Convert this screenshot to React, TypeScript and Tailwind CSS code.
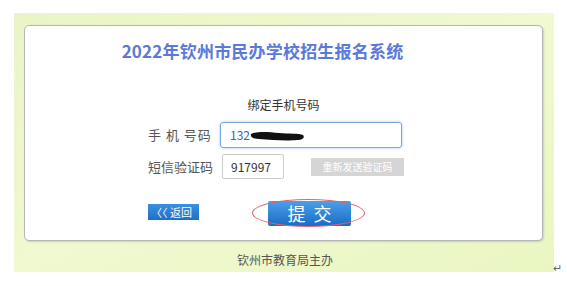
export default function App() {
  return (
    <div
      className="w-[567px] h-[286px] bg-white relative"
      style={{ fontFamily: '"Noto Sans CJK SC", "Liberation Sans", sans-serif' }}
    >
      <div className="pt-[13px] pl-[14px]">
        <div className="w-[540px] h-[259px] bg-gradient-to-br from-[#eaf5c6] via-[#f0f9cf] to-[#eaf6c2] pt-[12px] pl-[10px]">
          <div className="w-[519px] h-[216px] bg-white border border-[#b5b5b5] rounded-[5px] shadow-[1px_1px_2px_rgba(0,0,0,0.15)]">
            <h1 className="pt-[13px] pr-[42px] text-center text-[17px] leading-[24px] font-semibold text-[#5a79d9] tracking-[0.2px]">
              2022年钦州市民办学校招生报名系统
            </h1>
            <div className="mt-[34px] text-center text-[12px] leading-[16px] text-[#333]">
              绑定手机号码
            </div>
            <div className="pl-[123px] mt-[9px] flex flex-col gap-[6px]">
              <div className="flex items-center">
                <span className="w-[72px] text-[13px] text-[#555] tracking-[1px]">手 机 号码</span>
                <div className="relative w-[182px] h-[26px] border border-[#79a6df] rounded-[3px] shadow-[0_0_3px_rgba(90,140,220,0.5)] flex items-center pl-[9px] text-[12px] text-[#4060c0]">
                  132
                  <svg className="absolute left-[28px] top-[6px]" width="56" height="14" viewBox="0 0 56 14">
                    <path
                      d="M2 5 C8 2 20 3 30 4 C40 5 50 4 54 6 C56 8 54 11 48 11 C38 12 22 11 10 10 C4 10 1 8 2 5 Z"
                      fill="#111"
                    />
                  </svg>
                </div>
              </div>
              <div className="flex items-center">
                <span className="w-[74px] text-[13px] text-[#555]">短信验证码</span>
                <div className="w-[62px] h-[25px] border border-[#ccc] rounded-[2px] flex items-center pl-[8px] text-[12px] text-[#333]">
                  917997
                </div>
                <div className="ml-[27px] w-[93px] h-[18px] bg-[#d5d5d5] text-white text-[10px] leading-[18px] text-center">
                  重新发送验证码
                </div>
              </div>
            </div>
            <div className="pl-[123px] mt-[22px] flex items-start">
              <div className="mt-[3px] w-[51px] h-[16px] bg-gradient-to-b from-[#3d8fe0] to-[#1f6fc6] text-white text-[11px] leading-[16px] pl-[3px] whitespace-nowrap">
                〈〈 返回
              </div>
              <div className="relative ml-[69px]">
                <div className="absolute left-[-16px] top-[-2px] w-[113px] h-[28px] rounded-[50%] border border-[#e4606a]" />
                <div className="w-[83px] h-[25px] rounded-[2px] bg-gradient-to-b from-[#4aa0ea] to-[#1a6cc4] text-white text-[18px] leading-[25px] text-center tracking-[8px] pl-[8px]">
                  提交
                </div>
              </div>
            </div>
          </div>
          <div className="mt-[10px] text-center text-[12px] text-[#555] pr-[8px]">钦州市教育局主办</div>
        </div>
      </div>
      <span className="absolute left-[553px] top-[259px] text-[11px] text-[#666]">↵</span>
    </div>
  );
}
